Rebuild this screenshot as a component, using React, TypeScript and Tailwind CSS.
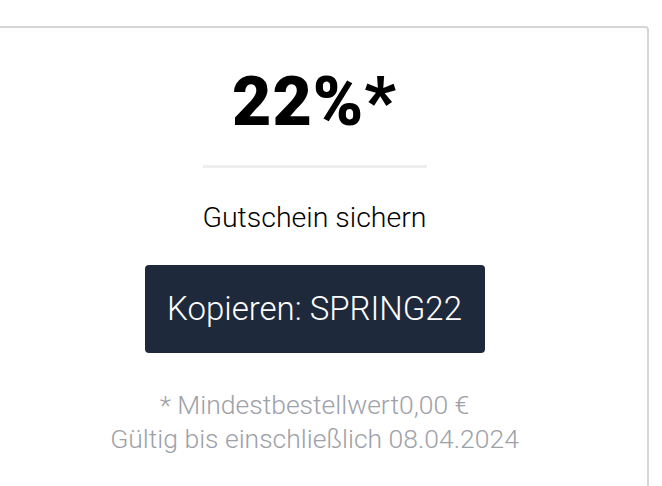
export default function App() {
  return (
    <div className="min-h-[486px] bg-white overflow-hidden font-['Roboto',sans-serif]">
      <div className="-ml-[20px] mt-[26px] w-[669px] h-[480px] border-2 border-[#d6d6d6] rounded-tr-[4px] flex flex-col items-center pt-[40px]">
        <h1 className="text-[68px] leading-[68px] font-black text-black tracking-[1px]">22%*</h1>
        <div className="mt-[29px] w-[224px] h-[3px] bg-[#eeeeee]" />
        <p className="mt-[33px] text-[28.5px] leading-[34px] font-light text-black">Gutschein sichern</p>
        <button
          type="button"
          className="mt-[30px] w-[340px] h-[88px] rounded-[4px] bg-[#1e293b] text-white text-[33px] font-light"
        >
          Kopieren: SPRING22
        </button>
        <div className="mt-[35px] text-center text-[26.5px] leading-[34px] text-[#9ea1a8] font-light">
          <p>* Mindestbestellwert0,00 €</p>
          <p>Gültig bis einschließlich 08.04.2024</p>
        </div>
      </div>
    </div>
  );
}
